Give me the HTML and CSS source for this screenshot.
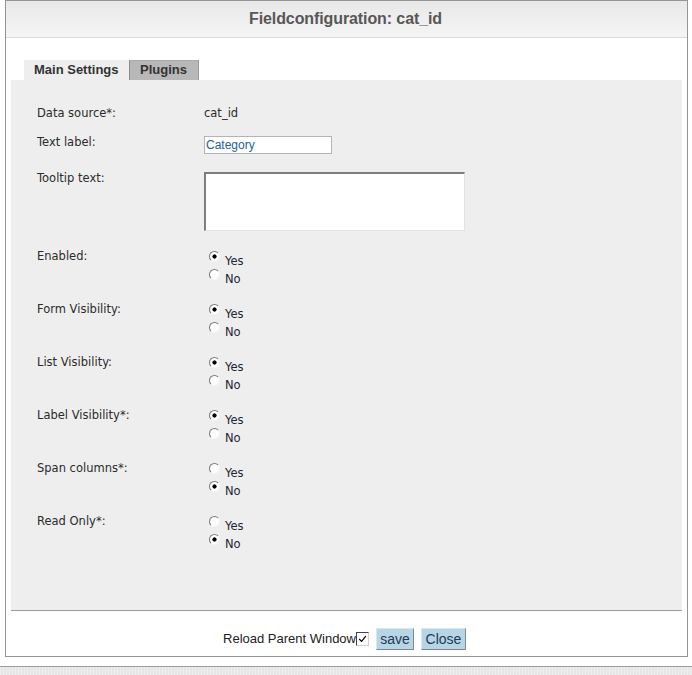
FILE: index.html
```html
<!DOCTYPE html>
<html>
<head>
<meta charset="utf-8">
<title>Fieldconfiguration</title>
<link rel="stylesheet" href="styles.css">
</head>
<body>
<div class="dialog">
  <div class="header"><h1 class="title">Fieldconfiguration: cat_id</h1></div>
  <div class="content">
    <div class="tabs">
      <span class="tab tab-active">Main Settings</span>
      <span class="tab tab-inactive">Plugins</span>
    </div>
    <div class="panel">
      <div class="row row-first">
        <div class="label">Data source*:</div>
        <div class="value">cat_id</div>
      </div>
      <div class="row row-input">
        <div class="label">Text label:</div>
        <div class="value"><input class="textinput" type="text" value="Category"></div>
      </div>
      <div class="row row-textarea">
        <div class="label">Tooltip text:</div>
        <div class="value"><textarea class="textarea"></textarea></div>
      </div>
      <div class="row row-radio">
        <div class="label">Enabled:</div>
        <div class="value options">
          <label class="option"><input class="radio" type="radio" name="enabled" checked><span>Yes</span></label>
          <label class="option"><input class="radio" type="radio" name="enabled"><span>No</span></label>
        </div>
      </div>
      <div class="row row-radio">
        <div class="label">Form Visibility:</div>
        <div class="value options">
          <label class="option"><input class="radio" type="radio" name="form" checked><span>Yes</span></label>
          <label class="option"><input class="radio" type="radio" name="form"><span>No</span></label>
        </div>
      </div>
      <div class="row row-radio">
        <div class="label">List Visibility:</div>
        <div class="value options">
          <label class="option"><input class="radio" type="radio" name="list" checked><span>Yes</span></label>
          <label class="option"><input class="radio" type="radio" name="list"><span>No</span></label>
        </div>
      </div>
      <div class="row row-radio">
        <div class="label">Label Visibility*:</div>
        <div class="value options">
          <label class="option"><input class="radio" type="radio" name="labelvis" checked><span>Yes</span></label>
          <label class="option"><input class="radio" type="radio" name="labelvis"><span>No</span></label>
        </div>
      </div>
      <div class="row row-radio">
        <div class="label">Span columns*:</div>
        <div class="value options">
          <label class="option"><input class="radio" type="radio" name="span"><span>Yes</span></label>
          <label class="option"><input class="radio" type="radio" name="span" checked><span>No</span></label>
        </div>
      </div>
      <div class="row row-radio">
        <div class="label">Read Only*:</div>
        <div class="value options">
          <label class="option"><input class="radio" type="radio" name="ro"><span>Yes</span></label>
          <label class="option"><input class="radio" type="radio" name="ro" checked><span>No</span></label>
        </div>
      </div>
    </div>
  </div>
  <div class="footer">
    <span class="reload">Reload Parent Window</span><span class="checkbox"><svg width="9" height="8" viewBox="0 0 9 8"><path d="M1.2 4 L3.6 6.4 L7.8 1.2" fill="none" stroke="#000" stroke-width="1.2"/></svg></span>
    <button class="btn btn-save" type="button">save</button>
    <button class="btn btn-close" type="button">Close</button>
  </div>
</div>
<div class="statusbar"></div>
</body>
</html>
```
FILE: styles.css
```css
html, body {
  margin: 0;
  padding: 0;
  background: #fff;
}
body {
  font-family: "DejaVu Sans", Verdana, sans-serif;
  font-size: 11.5px;
  color: #2b2b2b;
}
.dialog {
  width: 683px;
  box-sizing: border-box;
  margin-left: 5px;
  border: 1px solid #959595;
  background: #fff;
}
.header {
  height: 36px;
  border-bottom: 1px solid #d9d9d9;
  background: linear-gradient(#e8e8e8, #f5f5f5);
  display: flex;
  align-items: center;
  justify-content: center;
}
.title {
  margin: 0 2px 0 0;
  font-family: "Liberation Sans", Arial, sans-serif;
  font-size: 16px;
  font-weight: bold;
  color: #575757;
  letter-spacing: -0.1px;
}
.content {
  padding: 22px 5px 0 5px;
}
.tabs {
  display: flex;
  height: 20px;
  padding-left: 13px;
}
.tab {
  font-family: "Liberation Sans", Arial, sans-serif;
  font-size: 13px;
  font-weight: bold;
  color: #333;
  line-height: 20px;
  height: 20px;
  box-sizing: border-box;
}
.tab-active {
  background: #eeeeee;
  padding: 0 10px;
  width: 105px;
}
.tab-inactive {
  background: #b8b8b8;
  border-left: 1px solid #8c8c8c;
  border-right: 1px solid #9a9a9a;
  border-top: 1px solid #a8a8a8;
  line-height: 18px;
  padding: 0 8px 0 10px;
  width: 70px;
}
.panel {
  background: #eeeeee;
  border-bottom: 1px solid #9a9a9a;
  padding: 27px 0 58px 26px;
}
.row {
  display: flex;
  align-items: flex-start;
}
.label {
  width: 167px;
  flex: none;
  line-height: 13px;
}
.value {
  line-height: 13px;
}
.row-input {
  margin-top: 16px;
}
.row-textarea {
  margin-top: 18px;
}
.row-radio {
  margin-top: 15px;
}
.row-radio .label {
  margin-top: 1px;
}
.row-textarea + .row-radio {
  margin-top: 18px;
}
.textinput {
  display: block;
  margin: 0;
  width: 128px;
  height: 18px;
  box-sizing: border-box;
  border: 1px solid #b4b4b4;
  padding: 0 1px;
  font-family: "Liberation Sans", Arial, sans-serif;
  font-size: 12px;
  color: #1d5f9e;
  background: #fff;
  outline: none;
}
.textarea {
  display: block;
  margin: 0;
  width: 261px;
  height: 59px;
  box-sizing: border-box;
  border-style: solid;
  border-width: 2px 1px 1px 2px;
  border-color: #7e7e7e #e2e2e2 #e2e2e2 #7e7e7e;
  background: #fff;
  resize: none;
  padding: 0;
  outline: none;
}
.options {
  padding-top: 2px;
  display: flex;
  flex-direction: column;
}
.option {
  display: flex;
  align-items: flex-start;
  height: 18px;
  line-height: 18px;
  color: #222633;
}
.option span {
  margin-top: 1px;
}
.radio {
  -webkit-appearance: none;
  appearance: none;
  flex: none;
  width: 11px;
  height: 11px;
  margin: 0 5px 0 5px;
  box-sizing: border-box;
  border-radius: 50%;
  border: 1.5px solid;
  border-color: #7a7a7a #f4f4f4 #f4f4f4 #7a7a7a;
  background: radial-gradient(circle, #fafafa 0, #ffffff 60%, #e8e8e8 100%);
}
.radio:checked {
  background: radial-gradient(circle, #000 0, #000 1.8px, #fff 2.4px, #fff 100%);
}
.footer {
  height: 45px;
  box-sizing: border-box;
  padding: 17px 4px 0 0;
  display: flex;
  align-items: flex-start;
  justify-content: center;
  font-family: "Liberation Sans", Arial, sans-serif;
  font-size: 13px;
  color: #222;
}
.reload {
  line-height: 22px;
}
.checkbox {
  width: 13px;
  height: 14px;
  box-sizing: border-box;
  margin-top: 4px;
  border-style: solid;
  border-width: 1px;
  border-color: #444 #d0d0d0 #d0d0d0 #444;
  background: #fff;
  display: flex;
  align-items: center;
  justify-content: center;
}
.btn {
  margin: 0 0 0 7px;
  height: 22px;
  box-sizing: border-box;
  padding: 0 3px;
  font-family: "Liberation Sans", Arial, sans-serif;
  font-size: 14px;
  line-height: 20px;
  color: #1d3a57;
  background: #b7d5e6;
  border: 1px solid;
  border-color: #d8e8f0 #7d8a93 #7d8a93 #d8e8f0;
  border-radius: 0;
}
.btn-save {
  width: 38px;
}
.btn-close {
  width: 45px;
}
.statusbar {
  margin-top: 9px;
  height: 9px;
  border-top: 1px solid #9c9c9c;
  background-color: #e6e6e6;
  background-image: repeating-linear-gradient(90deg, rgba(255,255,255,0.35) 0 1px, transparent 1px 3px);
}
```
